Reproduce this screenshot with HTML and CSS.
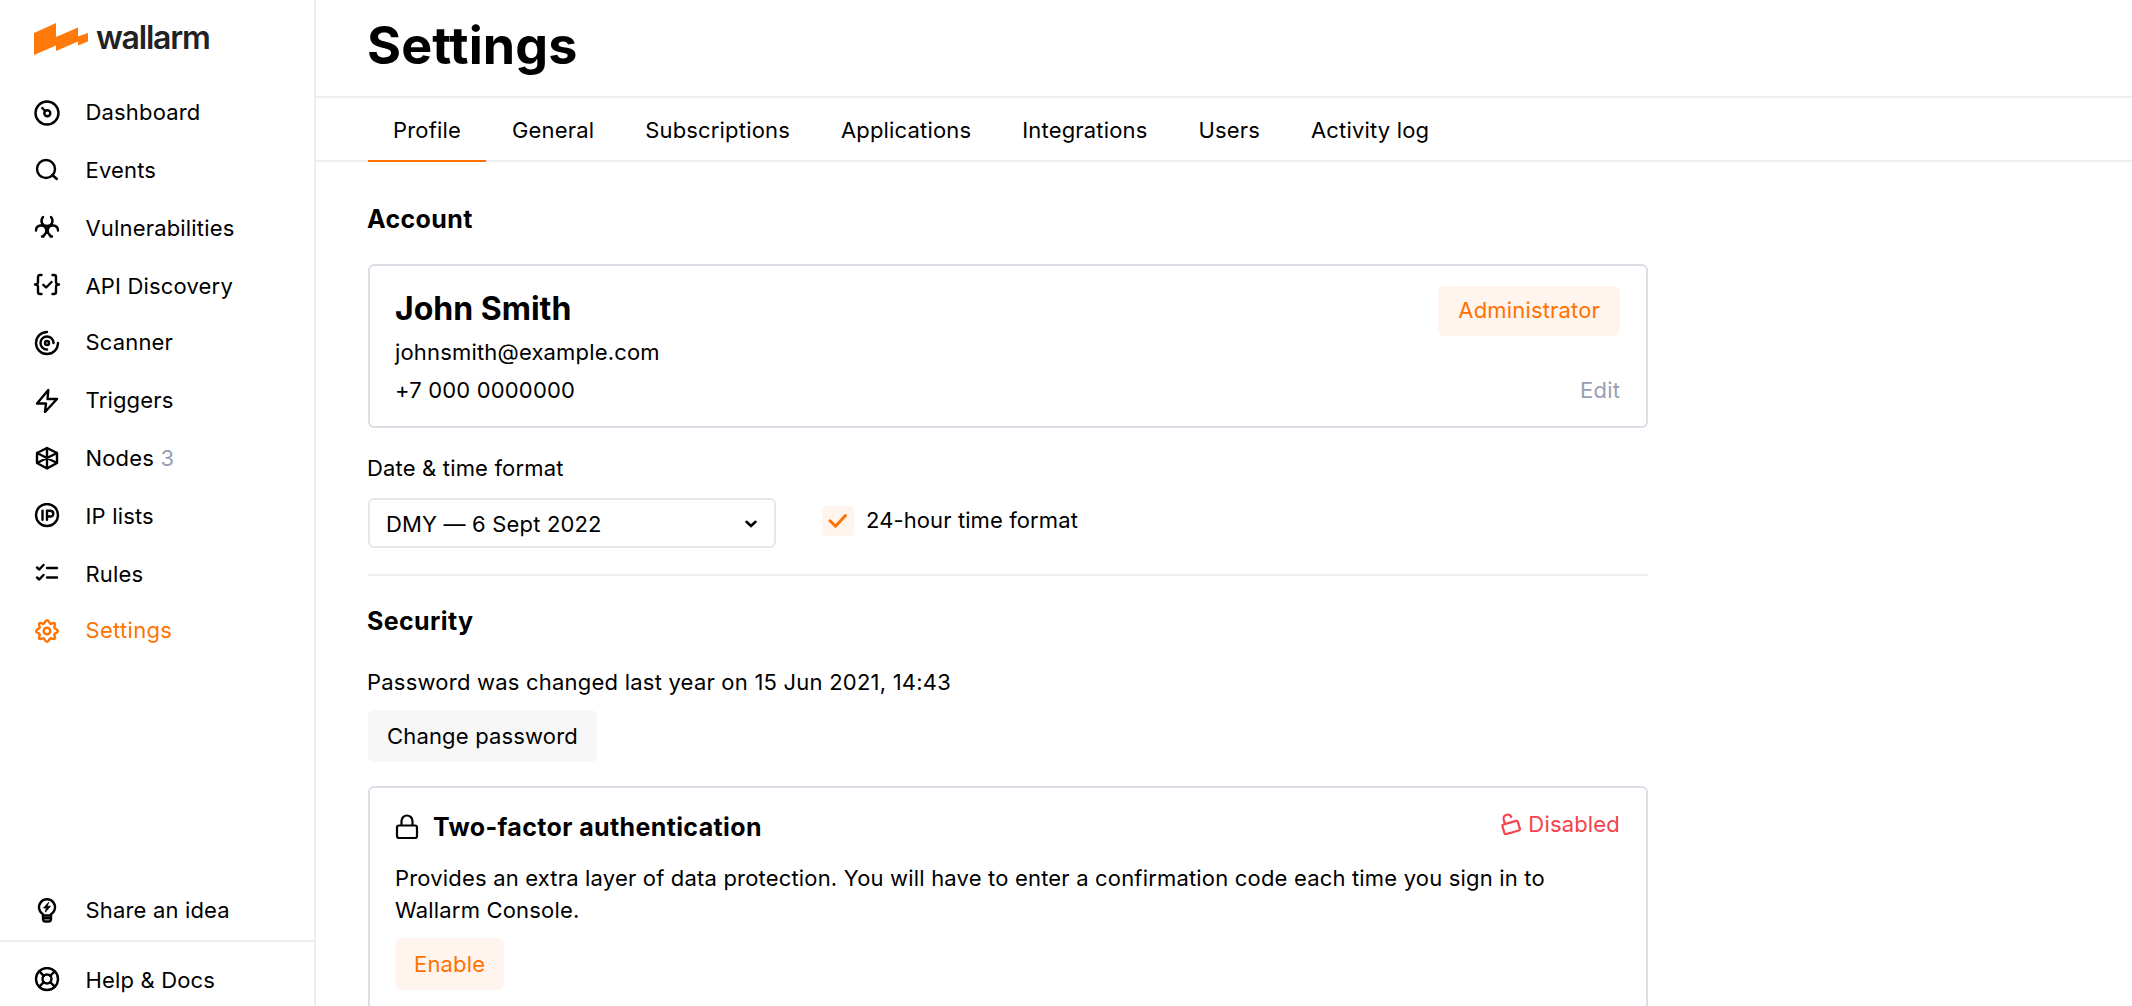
FILE: index.html
```html
<!DOCTYPE html>
<html lang="en">
<head>
<meta charset="utf-8">
<title>Settings</title>
<link rel="stylesheet" href="styles.css">
</head>
<body>
<div class="app">
  <aside class="sidebar">
    <a class="logo">
      <svg class="logo-mark" width="54" height="32" viewBox="0 0 54 32"><path d="M0 10 22 0v14L44 4.5v9L54 10v8.500l-10 4v-4L22 28v-5.500L0 32z" fill="#ff7a0a"/></svg>
      <span class="logo-text">wallarm</span>
    </a>
    <nav class="nav">
      <a class="nav-item"><svg class="icon" viewBox="0 0 28 28"><circle cx="14" cy="14" r="11.500"/><circle cx="14.300" cy="14.300" r="3"/><path d="m9.200 9 3 3"/></svg><span>Dashboard</span></a>
      <a class="nav-item"><svg class="icon" viewBox="0 0 28 28"><circle cx="13" cy="12" r="9"/><path d="m19.300 18 4.500 4"/></svg><span>Events</span></a>
      <a class="nav-item"><svg class="icon" viewBox="0 0 28 28"><path d="M10 2C6.800 6 9 11 14 11s7.200-5 4-9M3 15.500c0-6 8-6.500 10-2 1 3.500-.5 6-3.500 8M25 15.500c0-6-8-6.500-10-2-1 3.500.5 6 3.500 8M9 21.500h1.500M17.500 21.500H19"/></svg><span>Vulnerabilities</span></a>
      <a class="nav-item nav-item--tight"><svg class="icon" viewBox="0 0 28 28"><path d="M8.500 2H7Q5 2 5 4v5q0 2.500-3 2.500 3 0 3 2.500v5q0 2 2 2h1.500M19.500 2H21q2 0 2 2v5q0 2.500 3 2.500-3 0-3 2.500v5q0 2-2 2h-1.500M10.300 11.800l2.800 2.700 5.500-5.500"/></svg><span>API Discovery</span></a>
      <a class="nav-item"><svg class="icon" viewBox="0 0 28 28"><path d="M14 3A11 11 0 1 0 25 14M14 20.500A6.500 6.500 0 1 1 20.500 14"/><circle cx="14" cy="14" r="2"/></svg><span>Scanner</span></a>
      <a class="nav-item"><svg class="icon" viewBox="0 0 28 28"><path d="M15.300 3 4 16.500h9L12 25l12-13h-9.500z"/></svg><span>Triggers</span></a>
      <a class="nav-item"><svg class="icon" viewBox="0 0 28 28"><path d="M14 3 24 8v10l-10 5.500L4 18V8zM14 3v20M4 8l20 10M24 8 4 18"/></svg><span>Nodes <span class="count">3</span></span></a>
      <a class="nav-item"><svg class="icon" viewBox="0 0 28 28"><circle cx="14" cy="12" r="11"/><path d="M9.500 7.800v9M14 16.800v-9h3q3.300 0 3.300 2.900T17 13.500h-3"/></svg><span>IP lists</span></a>
      <a class="nav-item nav-item--tight"><svg class="icon" viewBox="0 0 28 28"><path d="m4 6.500 2.300 2L10.500 4M4 16.500l2.300 2 4.200-4.500M14 7h10M14 16.500h10"/></svg><span>Rules</span></a>
      <a class="nav-item nav-item--active"><svg class="icon" viewBox="0 0 28 28"><path d="M14 3.200c2.300 0 1.900 2.900 3.300 3.500s3.200-1.800 4.400-.4-.9 3-.4 4.400 3.500 1 3.500 3.300-2.900 1.900-3.500 3.300 1.800 3.200.4 4.400-3-.9-4.400-.4-1 3.500-3.300 3.500-1.900-2.900-3.300-3.500-3.200 1.800-4.400.4.900-3 .4-4.400S3.200 16.300 3.200 14s2.900-1.900 3.500-3.300-1.800-3.200-.4-4.400 3 .9 4.400.4 1-3.500 3.300-3.500z"/><circle cx="14" cy="14" r="3.300"/></svg><span>Settings</span></a>
    </nav>
    <div class="sidebar-footer">
      <a class="nav-item nav-item--idea"><svg class="icon" viewBox="0 0 28 28"><path d="M10 18.500v-1.300a8 8 0 1 1 8 0v1.300zM10 18.500V22q0 2.500 2.500 2.500h3Q18 24.500 18 22v-3.500M10.500 21.300h7"/><path d="m15.500 5.500-5 5.500h2.800l-1 4.200 5.200-6h-3z" fill="currentColor" stroke-width=".8"/></svg><span>Share an idea</span></a>
      <a class="nav-item nav-item--help"><svg class="icon" viewBox="0 0 28 28"><circle cx="14" cy="12" r="11"/><circle cx="14" cy="12" r="4.500"/><path d="m6.300 4.300 4.500 4.500m6.400 6.400 4.500 4.500m0-15.400-4.500 4.500m-6.400 6.400-4.500 4.500"/></svg><span>Help &amp; Docs</span></a>
    </div>
  </aside>
  <main class="main">
    <header class="header"><h1 class="title">Settings</h1></header>
    <nav class="tabs">
      <a class="tab tab--active">Profile</a>
      <a class="tab">General</a>
      <a class="tab">Subscriptions</a>
      <a class="tab">Applications</a>
      <a class="tab">Integrations</a>
      <a class="tab">Users</a>
      <a class="tab">Activity log</a>
    </nav>
    <div class="content">
      <h2 class="section-title">Account</h2>
      <section class="card profile">
        <div>
          <h3 class="profile-name">John Smith</h3>
          <p class="profile-line">johnsmith@example.com</p>
          <p class="profile-line">+7 000 0000000</p>
        </div>
        <div class="profile-side">
          <span class="badge">Administrator</span>
          <a class="edit">Edit</a>
        </div>
      </section>
      <p class="field-label">Date &amp; time format</p>
      <div class="format-row">
        <div class="select"><span>DMY — 6 Sept 2022</span><svg class="chevron" width="12" height="8" viewBox="0 0 12 8"><path d="m1.500 1.800 4.500 4.200 4.500-4.200"/></svg></div>
        <label class="check"><span class="check-box"><svg width="20" height="16" viewBox="0 0 20 16"><path d="m2 7.800 5.500 5.500L17.500 2.500"/></svg></span><span>24-hour time format</span></label>
      </div>
      <h2 class="section-title section-title--security">Security</h2>
      <p class="password-note">Password was changed last year on 15 Jun 2021, 14:43</p>
      <button class="button">Change password</button>
      <section class="card twofa">
        <div class="twofa-head">
          <svg class="lock" width="24" height="26" viewBox="0 0 24 26"><rect x="2" y="11.500" width="20" height="12.500" rx="2"/><path d="M6.500 11.500V7a5.500 5.500 0 0 1 11 0v4.500"/></svg>
          <h3 class="twofa-title">Two-factor authentication</h3>
          <span class="status"><svg class="unlock" width="20" height="22" viewBox="0 0 20 22"><g transform="rotate(-16 10 14)"><rect x="2" y="9.500" width="16" height="10" rx="1.500"/><path d="M5 9.500V5.500a4 4 0 0 1 8-1"/></g></svg>Disabled</span>
        </div>
        <p class="twofa-text">Provides an extra layer of data protection. You will have to enter a confirmation code each time you sign in to Wallarm Console.</p>
        <button class="button button--accent">Enable</button>
      </section>
    </div>
  </main>
</div>
</body>
</html>
```
FILE: styles.css
```css
* { box-sizing: border-box; }
body {
  margin: 0;
  background: #fff;
  color: #000;
  font: 22px/32px Inter, "Liberation Sans", sans-serif;
  letter-spacing: 0.17px;
}
h1, h2, h3, p { margin: 0; }
.app { display: flex; height: 1006px; overflow: hidden; }

.sidebar {
  display: flex;
  flex-direction: column;
  flex: 0 0 316px;
  border-right: 2px solid #ededf2;
}
.logo { display: flex; height: 83px; padding: 23px 0 0 34px; }
.logo-mark { flex: none; }
.logo-text {
  margin: -1px 0 0 8px;
  color: #222;
  font-size: 32px;
  font-weight: 600;
  letter-spacing: -1.2px;
}
.nav-item { display: flex; height: 58px; padding: 13px 0 0 33px; }
.nav-item--tight { height: 56px; }
.nav-item--active { color: #ff7200; letter-spacing: 0.3px; }
.count { color: #98a0b4; }
.icon {
  flex: none;
  width: 28px;
  height: 28px;
  margin: 3px 24.5px 0 0;
  fill: none;
  stroke: currentColor;
  stroke-width: 2.4;
  stroke-linecap: round;
  stroke-linejoin: round;
}
.sidebar-footer { margin-top: auto; }
.nav-item--idea { height: 61px; border-bottom: 2px solid #ededf2; }
.nav-item--help { height: 64px; padding-top: 22px; }

.main { flex: 1; min-width: 0; }
.header { height: 98px; padding: 14px 0 0 51px; border-bottom: 2px solid #ededf2; }
.title { font-size: 52px; line-height: 64px; font-weight: 700; letter-spacing: 0.1px; }
.tabs { display: flex; gap: 1px; height: 64px; padding-left: 52px; border-bottom: 2px solid #ededf2; }
.tab { height: 64px; padding: 16px 25px 0; }
.tab--active { border-bottom: 2px solid #ff7200; }

.content { width: 1332px; padding: 41px 0 0 52px; }
.section-title,
.twofa-title {
  font-size: 25px;
  line-height: 32px;
  font-weight: 700;
  letter-spacing: 0.37px;
}
.section-title { text-indent: -1px; }
.card { border: 2px solid #dadfe5; border-radius: 6px; }
.profile {
  display: flex;
  justify-content: space-between;
  height: 164px;
  margin-top: 29px;
  padding: 20px 26px 0 25px;
}
.profile-name { margin-bottom: 4px; font-size: 32px; line-height: 46px; font-weight: 700; letter-spacing: 0; }
.profile-line { line-height: 38px; }
.profile-line:nth-child(2) { margin-top: -3px; }
.profile-side { display: flex; flex-direction: column; align-items: flex-end; }
.badge {
  height: 50px;
  padding: 8px 20px;
  border-radius: 6px;
  background: #fff4ee;
  color: #ff7200;
}
.edit { margin-top: 38px; color: #98a0b4; }
.field-label { margin-top: 24px; text-indent: -1px; }
.format-row {
  display: flex;
  gap: 46px;
  height: 92px;
  padding-top: 14px;
  border-bottom: 2px solid #ededf2;
}
.select {
  display: flex;
  justify-content: space-between;
  width: 408px;
  height: 50px;
  padding: 8px 16px;
  border: 2px solid #e6e6eb;
  border-radius: 6px;
}
.chevron { margin: 12px 1px 0 0; fill: none; stroke: #000; stroke-width: 2.6; stroke-linecap: round; }
.check { display: flex; gap: 12px; padding-top: 6px; letter-spacing: 0.1px; }
.check-box {
  display: grid;
  place-items: center;
  width: 32px;
  height: 30px;
  margin-top: 2px;
  border-radius: 4px;
  background: #fff4ee;
}
.check-box svg { fill: none; stroke: #ff7200; stroke-width: 3; stroke-linecap: round; stroke-linejoin: round; }
.section-title--security { margin-top: 29px; }
.password-note { margin-top: 29px; text-indent: -1px; letter-spacing: 0.22px; }
.button {
  display: block;
  height: 52px;
  margin-top: 12px;
  padding: 0 19px;
  border: 0;
  border-radius: 6px;
  background: #f7f7f7;
  color: #000;
  font: inherit;
  letter-spacing: inherit;
}
.button--accent { background: #fff4ee; color: #ff7200; }
.twofa { height: 260px; margin-top: 24px; padding: 23px 26px 0 25px; }
.twofa-head { display: flex; height: 51px; }
.twofa-title { margin-left: 14px; }
.twofa-text { max-width: 1180px; letter-spacing: 0.18px; }
.lock { margin-top: 3px; fill: none; stroke: #000; stroke-width: 2.2; }
.status { display: flex; gap: 7px; margin: -3px 0 0 auto; color: #f5424b; }
.unlock { margin-top: 5px; fill: none; stroke: currentColor; stroke-width: 2.2; stroke-linecap: round; }
```
